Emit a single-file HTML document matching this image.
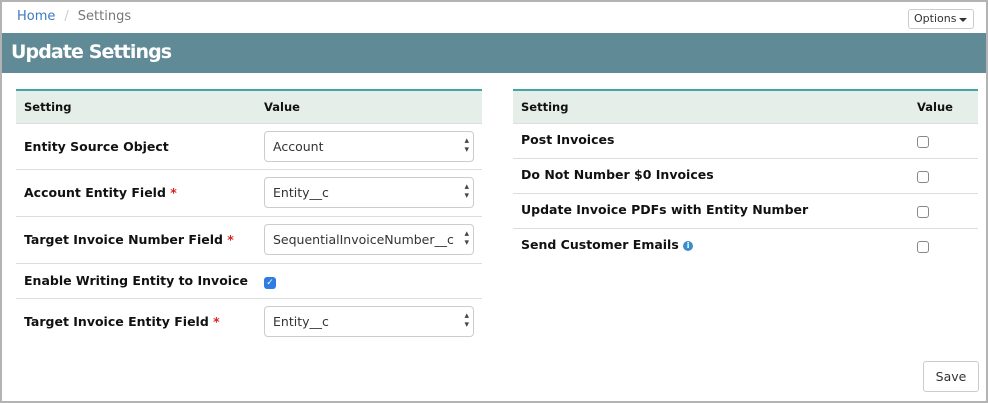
<!DOCTYPE html>
<html><head><style>
*{box-sizing:border-box;margin:0;padding:0}
body{width:988px;height:403px;overflow:hidden;background:#fff;font-family:"DejaVu Sans",Verdana,sans-serif;position:relative}
.frame{position:absolute;left:0;top:0;width:988px;height:403px;border:2px solid #b3b3b3}
.crumb{position:absolute;left:17px;top:9px;font-size:13px;color:#777}
.crumb a{color:#3b7bbf;text-decoration:none}
.crumb .sep{color:#ccc;margin:0 9px}
.opt{position:absolute;left:908px;top:9px;width:66px;height:20px;border:1px solid #ccc;border-radius:3px;font-size:11px;color:#333;padding:2px 0 0 5px}
.opt:after{content:"";position:absolute;right:6px;top:8px;border:4px solid transparent;border-top:4px solid #333;border-bottom:0}
.banner{position:absolute;left:2px;top:33px;width:984px;height:40px;background:#608a96;color:#fff;font-size:19px;font-weight:bold;padding:8px 0 0 9px;letter-spacing:-0.9px}
table{position:absolute;border-collapse:collapse;font-size:12.5px;font-weight:bold;color:#111}
th{background:#e6eee9;text-align:left;height:33px;font-size:11.5px;padding:0 8px;border-top:2px solid #44a4a8}
td{padding:0 8px;border-top:1px solid #ddd}
.l{left:16px;top:89px;width:466px}
.r{left:513px;top:89px;width:465px}
.l tr td{height:47px}
.l tr.f td{height:46px}
.l tr.s td{height:35px}
.r td{height:35px}
.r td:first-child{padding-bottom:2px}
.req{color:#e02020}
.sel{width:210px;height:31px;border:1px solid #ccc;border-radius:4px;font-weight:normal;font-size:12.5px;color:#333;padding:7px 0 0 8px;position:relative}
.sel:after{content:"▴";position:absolute;right:4px;top:4px;font-size:9px;color:#444}
.sel:before{content:"▾";position:absolute;right:4px;top:13px;font-size:9px;color:#444}
.cb{width:12px;height:12px;border:1px solid #888;border-radius:3px;display:inline-block;vertical-align:middle}
.cbon{width:12px;height:12px;background:#2f7de1;border-radius:3px;display:inline-block;color:#fff;font-size:9px;text-align:center;line-height:12px}
.info{display:inline-block;width:10px;height:10px;border-radius:50%;background:#3c8ecb;color:#fff;font-size:8px;text-align:center;line-height:10px;vertical-align:1px}
.save{position:absolute;left:923px;top:361px;width:56px;height:31px;border:1px solid #ccc;border-radius:3px;font-size:12.5px;color:#333;text-align:center;line-height:29px}
</style></head><body>
<div class="crumb"><a>Home</a><span class="sep">/</span>Settings</div>
<div class="opt">Options</div>
<div class="banner">Update Settings</div>
<table class="l">
<tr><th style="width:248px">Setting</th><th>Value</th></tr>
<tr class="f"><td>Entity Source Object</td><td><div class="sel">Account</div></td></tr>
<tr><td>Account Entity Field <span class="req">*</span></td><td><div class="sel">Entity__c</div></td></tr>
<tr><td>Target Invoice Number Field <span class="req">*</span></td><td><div class="sel">SequentialInvoiceNumber__c</div></td></tr>
<tr class="s"><td>Enable Writing Entity to Invoice</td><td><span class="cbon">✓</span></td></tr>
<tr><td>Target Invoice Entity Field <span class="req">*</span></td><td><div class="sel">Entity__c</div></td></tr>
</table>
<table class="r">
<tr><th>Setting</th><th style="width:65px;padding-left:4px">Value</th></tr>
<tr><td>Post Invoices</td><td style="padding-left:4px"><span class="cb"></span></td></tr>
<tr><td>Do Not Number $0 Invoices</td><td style="padding-left:4px"><span class="cb"></span></td></tr>
<tr><td>Update Invoice PDFs with Entity Number</td><td style="padding-left:4px"><span class="cb"></span></td></tr>
<tr><td>Send Customer Emails <span class="info">i</span></td><td style="padding-left:4px"><span class="cb"></span></td></tr>
</table>
<div class="save">Save</div>
<div class="frame"></div>
</body></html>
